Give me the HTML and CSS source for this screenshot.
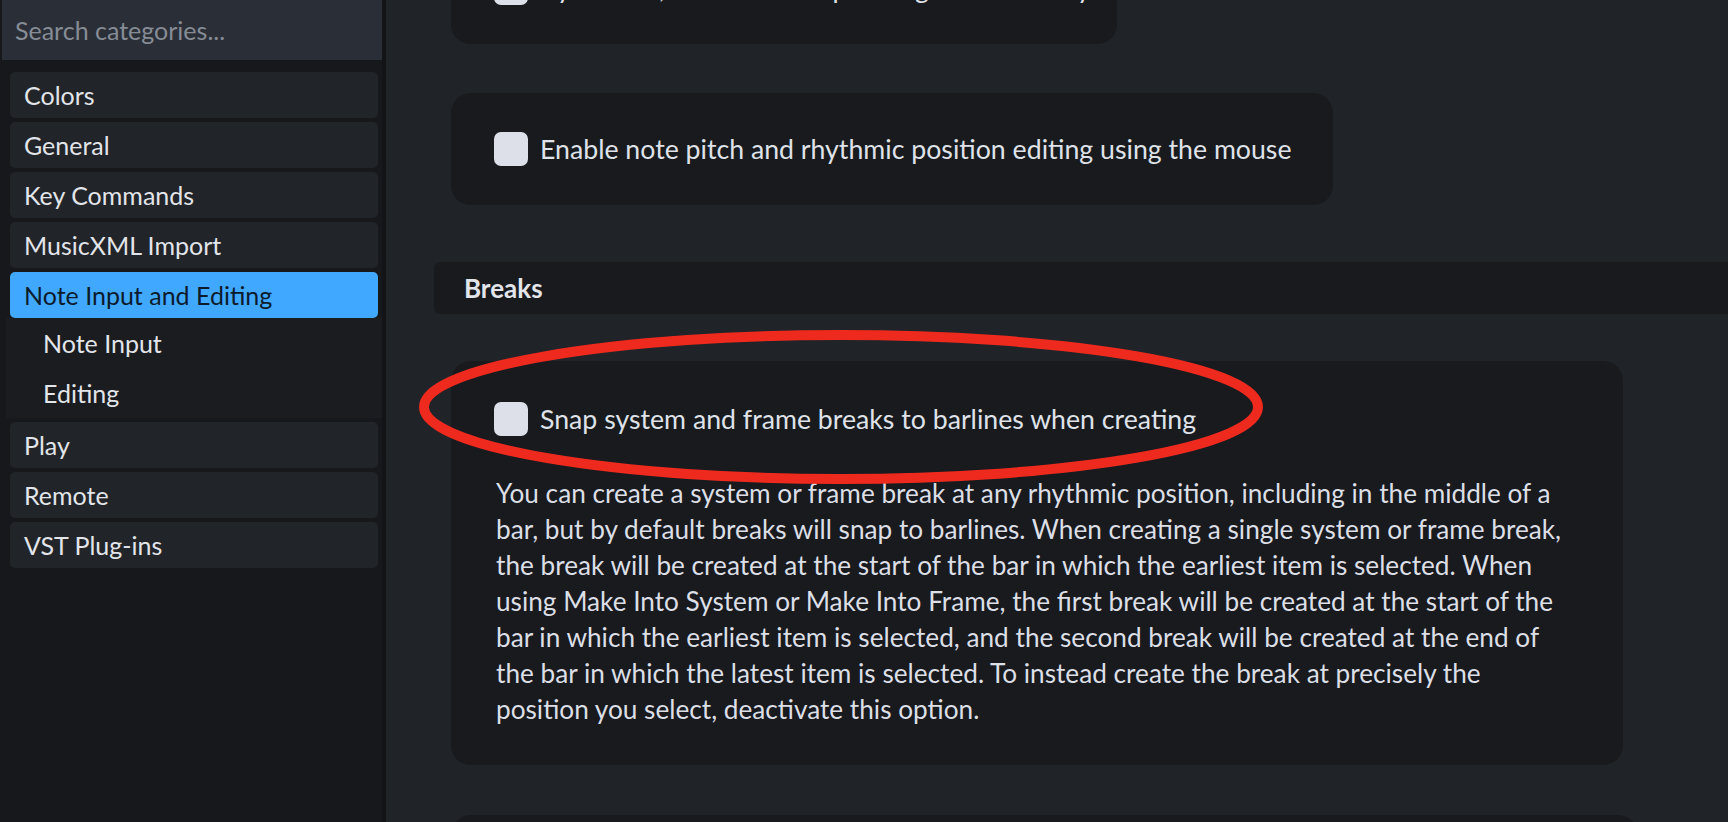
FILE: index.html
```html
<!DOCTYPE html>
<html lang="en">
<head>
<meta charset="utf-8">
<title>Preferences</title>
<link rel="stylesheet" href="styles.css">
</head>
<body>
<aside class="sidebar">
  <div class="search">Search categories...</div>
  <nav class="cats">
    <div class="cat">Colors</div>
    <div class="cat">General</div>
    <div class="cat">Key Commands</div>
    <div class="cat">MusicXML Import</div>
    <div class="group">
      <div class="cat active">Note Input and Editing</div>
      <div class="subcats">
        <div class="sub">Note Input</div>
        <div class="sub">Editing</div>
      </div>
    </div>
    <div class="cat">Play</div>
    <div class="cat">Remote</div>
    <div class="cat">VST Plug-ins</div>
  </nav>
</aside>
<div class="divider"></div>
<main class="content">
  <div class="scroll">
    <section class="card card-first">
      <label class="option"><span class="check"></span><span class="label">By default, edit notes on pressing the Enter key</span></label>
    </section>
    <section class="card">
      <label class="option"><span class="check"></span><span class="label">Enable note pitch and rhythmic position editing using the mouse</span></label>
    </section>
    <h2 class="section-title">Breaks</h2>
    <section class="card">
      <label class="option"><span class="check"></span><span class="label">Snap system and frame breaks to barlines when creating</span></label>
      <p class="desc">You can create a system or frame break at any rhythmic position, including in the middle of a<br>bar, but by default breaks will snap to barlines. When creating a single system or frame break,<br>the break will be created at the start of the bar in which the earliest item is selected. When<br>using Make Into System or Make Into Frame, the first break will be created at the start of the<br>bar in which the earliest item is selected, and the second break will be created at the end of<br>the bar in which the latest item is selected. To instead create the break at precisely the<br>position you select, deactivate this option.</p>
    </section>
    <section class="card">
      <label class="option"><span class="check"></span><span class="label">Create frame breaks</span></label>
      <p class="desc">When creating a frame break, also create a system break at the same rhythmic position so that<br>the music continues in a new system.</p>
    </section>
  </div>
  <svg class="annotation" width="870" height="180" viewBox="0 0 870 180" aria-hidden="true">
    <ellipse cx="431" cy="82" rx="417" ry="72" fill="none" stroke="#ee2a1e" stroke-width="10"/>
  </svg>
</main>
</body>
</html>
```
FILE: styles.css
```css
html, body {
  margin: 0;
  padding: 0;
}
body {
  width: 1728px;
  height: 822px;
  overflow: hidden;
  display: flex;
  background: #202327;
  font-family: Lato, "Liberation Sans", sans-serif;
  font-size: 26.7px;
  color: #dfe2e8;
}
.sidebar {
  width: 382px;
  flex: none;
  background: #16181b;
  display: flex;
  flex-direction: column;
  font-size: 25px;
}
.search {
  margin-left: 2px;
  height: 60px;
  background: #2a2f37;
  color: #868c95;
  display: flex;
  align-items: center;
  padding-left: 13px;
}
.cats {
  display: flex;
  flex-direction: column;
  gap: 4px;
  padding: 12px 4px 0 10px;
}
.cat {
  height: 46px;
  background: #212428;
  border-radius: 5px;
  display: flex;
  align-items: center;
  padding-left: 14px;
  color: #e2e5ea;
}
.cat.active {
  background: #40a8ff;
  color: #0c1b2b;
}
.group {
  display: flex;
  flex-direction: column;
}
.subcats {
  margin: 0 -4px;
  background: #1a1c20;
}
.sub {
  height: 50px;
  display: flex;
  align-items: center;
  padding-left: 37px;
  color: #e2e5ea;
}
.divider {
  width: 4px;
  flex: none;
  background: #121417;
}
.content {
  flex: 1;
  position: relative;
  overflow: hidden;
}
.scroll {
  margin-top: -68px;
  padding-left: 48px;
  display: flex;
  flex-direction: column;
  align-items: flex-start;
}
.card {
  margin-left: 17px;
  background: #181a1e;
  border-radius: 20px;
  padding: 39px 41px 39px 43px;
}
.card-first {
  padding-right: 26px;
}
.card + .card {
  margin-top: 49px;
}
.option {
  display: flex;
  align-items: center;
  gap: 12px;
  height: 34px;
  white-space: nowrap;
}
.check {
  width: 34px;
  height: 34px;
  border-radius: 7px;
  background: #dde0e8;
  flex: none;
}
.section-title {
  align-self: stretch;
  margin: 57px 0 47px;
  height: 52px;
  display: flex;
  align-items: center;
  padding-left: 30px;
  background: #181a1e;
  border-radius: 6px 0 0 6px;
  font-size: 26px;
  font-weight: 700;
  color: #e2e5ea;
}
.section-title + .card {
  padding: 41px 62px 38px 43px;
}
.section-title + .card + .card {
  margin-top: 50px;
  padding: 41px 62px 38px 43px;
}
.desc {
  margin: 39px 0 0 2px;
  font-size: 26.2px;
  line-height: 36px;
  color: #dcdfe6;
  white-space: nowrap;
}
.annotation {
  position: absolute;
  left: 24px;
  top: 325px;
  pointer-events: none;
}
```
